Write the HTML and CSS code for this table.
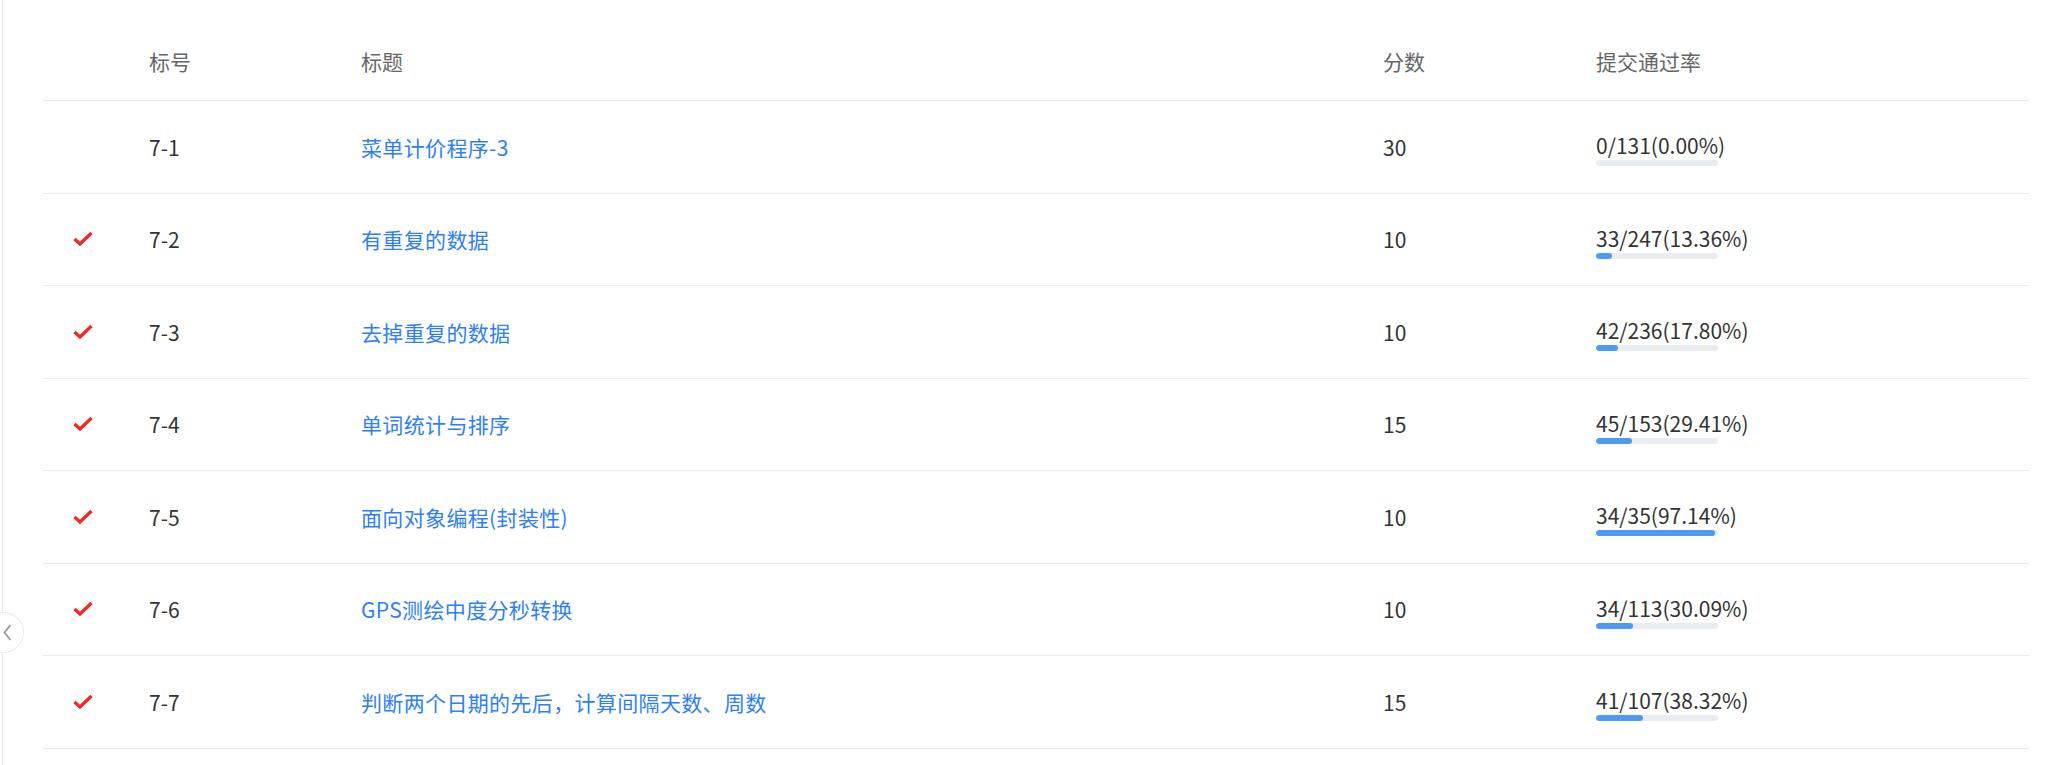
FILE: index.html
```html
<!DOCTYPE html>
<html lang="zh-CN">
<head>
    <meta charset="UTF-8">
    <meta name="viewport" content="width=device-width, initial-scale=1.0">
    <title>题目列表</title>
    <link rel="stylesheet" href="styles.css">
</head>
<body>
    <div class="page">
        <button class="collapse-btn" type="button" aria-label="收起">
            <svg width="9" height="17" viewBox="0 0 9 17"><polyline points="7.5,1 1.5,8.5 7.5,16" fill="none" stroke="#9a9a9a" stroke-width="1.8"/></svg>
        </button>
        <div class="problem-table">
            <div class="row head">
                <div class="cell"></div>
                <div class="cell">标号</div>
                <div class="cell">标题</div>
                <div class="cell">分数</div>
                <div class="cell">提交通过率</div>
            </div>

            <div class="row">
                <div class="cell"></div>
                <div class="cell">7-1</div>
                <div class="cell"><a class="title-link" href="#">菜单计价程序-3</a></div>
                <div class="cell">30</div>
                <div class="cell rate">
                    <span class="rate-text">0/131(0.00%)</span>
                    <div class="bar"><div class="bar-fill" style="width: 0%"></div></div>
                </div>
            </div>

            <div class="row">
                <div class="cell"><svg class="check" width="20" height="16" viewBox="0 0 20 16"><polyline points="1.5,8 7,13 18.5,2" fill="none" stroke="#f02a25" stroke-width="3.4"/></svg></div>
                <div class="cell">7-2</div>
                <div class="cell"><a class="title-link" href="#">有重复的数据</a></div>
                <div class="cell">10</div>
                <div class="cell rate">
                    <span class="rate-text">33/247(13.36%)</span>
                    <div class="bar"><div class="bar-fill" style="width: 13.36%"></div></div>
                </div>
            </div>

            <div class="row">
                <div class="cell"><svg class="check" width="20" height="16" viewBox="0 0 20 16"><polyline points="1.5,8 7,13 18.5,2" fill="none" stroke="#f02a25" stroke-width="3.4"/></svg></div>
                <div class="cell">7-3</div>
                <div class="cell"><a class="title-link" href="#">去掉重复的数据</a></div>
                <div class="cell">10</div>
                <div class="cell rate">
                    <span class="rate-text">42/236(17.80%)</span>
                    <div class="bar"><div class="bar-fill" style="width: 17.80%"></div></div>
                </div>
            </div>

            <div class="row">
                <div class="cell"><svg class="check" width="20" height="16" viewBox="0 0 20 16"><polyline points="1.5,8 7,13 18.5,2" fill="none" stroke="#f02a25" stroke-width="3.4"/></svg></div>
                <div class="cell">7-4</div>
                <div class="cell"><a class="title-link" href="#">单词统计与排序</a></div>
                <div class="cell">15</div>
                <div class="cell rate">
                    <span class="rate-text">45/153(29.41%)</span>
                    <div class="bar"><div class="bar-fill" style="width: 29.41%"></div></div>
                </div>
            </div>

            <div class="row">
                <div class="cell"><svg class="check" width="20" height="16" viewBox="0 0 20 16"><polyline points="1.5,8 7,13 18.5,2" fill="none" stroke="#f02a25" stroke-width="3.4"/></svg></div>
                <div class="cell">7-5</div>
                <div class="cell"><a class="title-link" href="#">面向对象编程(封装性)</a></div>
                <div class="cell">10</div>
                <div class="cell rate">
                    <span class="rate-text">34/35(97.14%)</span>
                    <div class="bar"><div class="bar-fill" style="width: 97.14%"></div></div>
                </div>
            </div>

            <div class="row">
                <div class="cell"><svg class="check" width="20" height="16" viewBox="0 0 20 16"><polyline points="1.5,8 7,13 18.5,2" fill="none" stroke="#f02a25" stroke-width="3.4"/></svg></div>
                <div class="cell">7-6</div>
                <div class="cell"><a class="title-link" href="#">GPS测绘中度分秒转换</a></div>
                <div class="cell">10</div>
                <div class="cell rate">
                    <span class="rate-text">34/113(30.09%)</span>
                    <div class="bar"><div class="bar-fill" style="width: 30.09%"></div></div>
                </div>
            </div>

            <div class="row">
                <div class="cell"><svg class="check" width="20" height="16" viewBox="0 0 20 16"><polyline points="1.5,8 7,13 18.5,2" fill="none" stroke="#f02a25" stroke-width="3.4"/></svg></div>
                <div class="cell">7-7</div>
                <div class="cell"><a class="title-link" href="#">判断两个日期的先后，计算间隔天数、周数</a></div>
                <div class="cell">15</div>
                <div class="cell rate">
                    <span class="rate-text">41/107(38.32%)</span>
                    <div class="bar"><div class="bar-fill" style="width: 38.32%"></div></div>
                </div>
            </div>
        </div>
    </div>
</body>
</html>
```

FILE: styles.css
```css
body {
    margin: 0;
    background: #fff;
    font-family: "Noto Sans CJK SC", "Noto Sans", sans-serif;
    font-size: 21px;
    color: #333;
    overflow: hidden;
}
.page {
    position: relative;
    margin-left: 2px;
    border-left: 1px solid #e8e8ea;
    min-height: 765px;
    padding-left: 40px;
    padding-right: 17px;
}
.collapse-btn {
    position: absolute;
    left: -20px;
    top: 612px;
    width: 41px;
    height: 41px;
    border-radius: 50%;
    border: 1px solid #e6e6e6;
    background: #fff;
    padding: 0 0 0 7px;
    display: flex;
    align-items: center;
    justify-content: center;
    cursor: pointer;
}
.problem-table {
    display: flex;
    flex-direction: column;
}
.row {
    display: grid;
    grid-template-columns: 106px 212px 1022px 213px 1fr;
    align-items: center;
    height: 92.5px;
    box-sizing: border-box;
    border-bottom: 1px solid #ebebeb;
}
.row.head {
    height: 101px;
    padding-top: 22px;
    color: #666;
}
.cell {
    line-height: 24px;
}
.check {
    display: block;
    margin-left: 30px;
}
.title-link {
    color: #2f7ff3;
    text-decoration: none;
    letter-spacing: 0.35px;
}
.title-link:hover {
    text-decoration: underline;
}
.rate {
    display: flex;
    flex-direction: column;
    align-items: flex-start;
    padding-top: 6px;
}
.rate-text {
    line-height: 24px;
}
.bar {
    margin-top: 3px;
    width: 122px;
    height: 6px;
    border-radius: 3px;
    background: #e9ecf1;
    overflow: hidden;
}
.bar-fill {
    height: 100%;
    border-radius: 3px;
    background: #4d9bf0;
}
```
